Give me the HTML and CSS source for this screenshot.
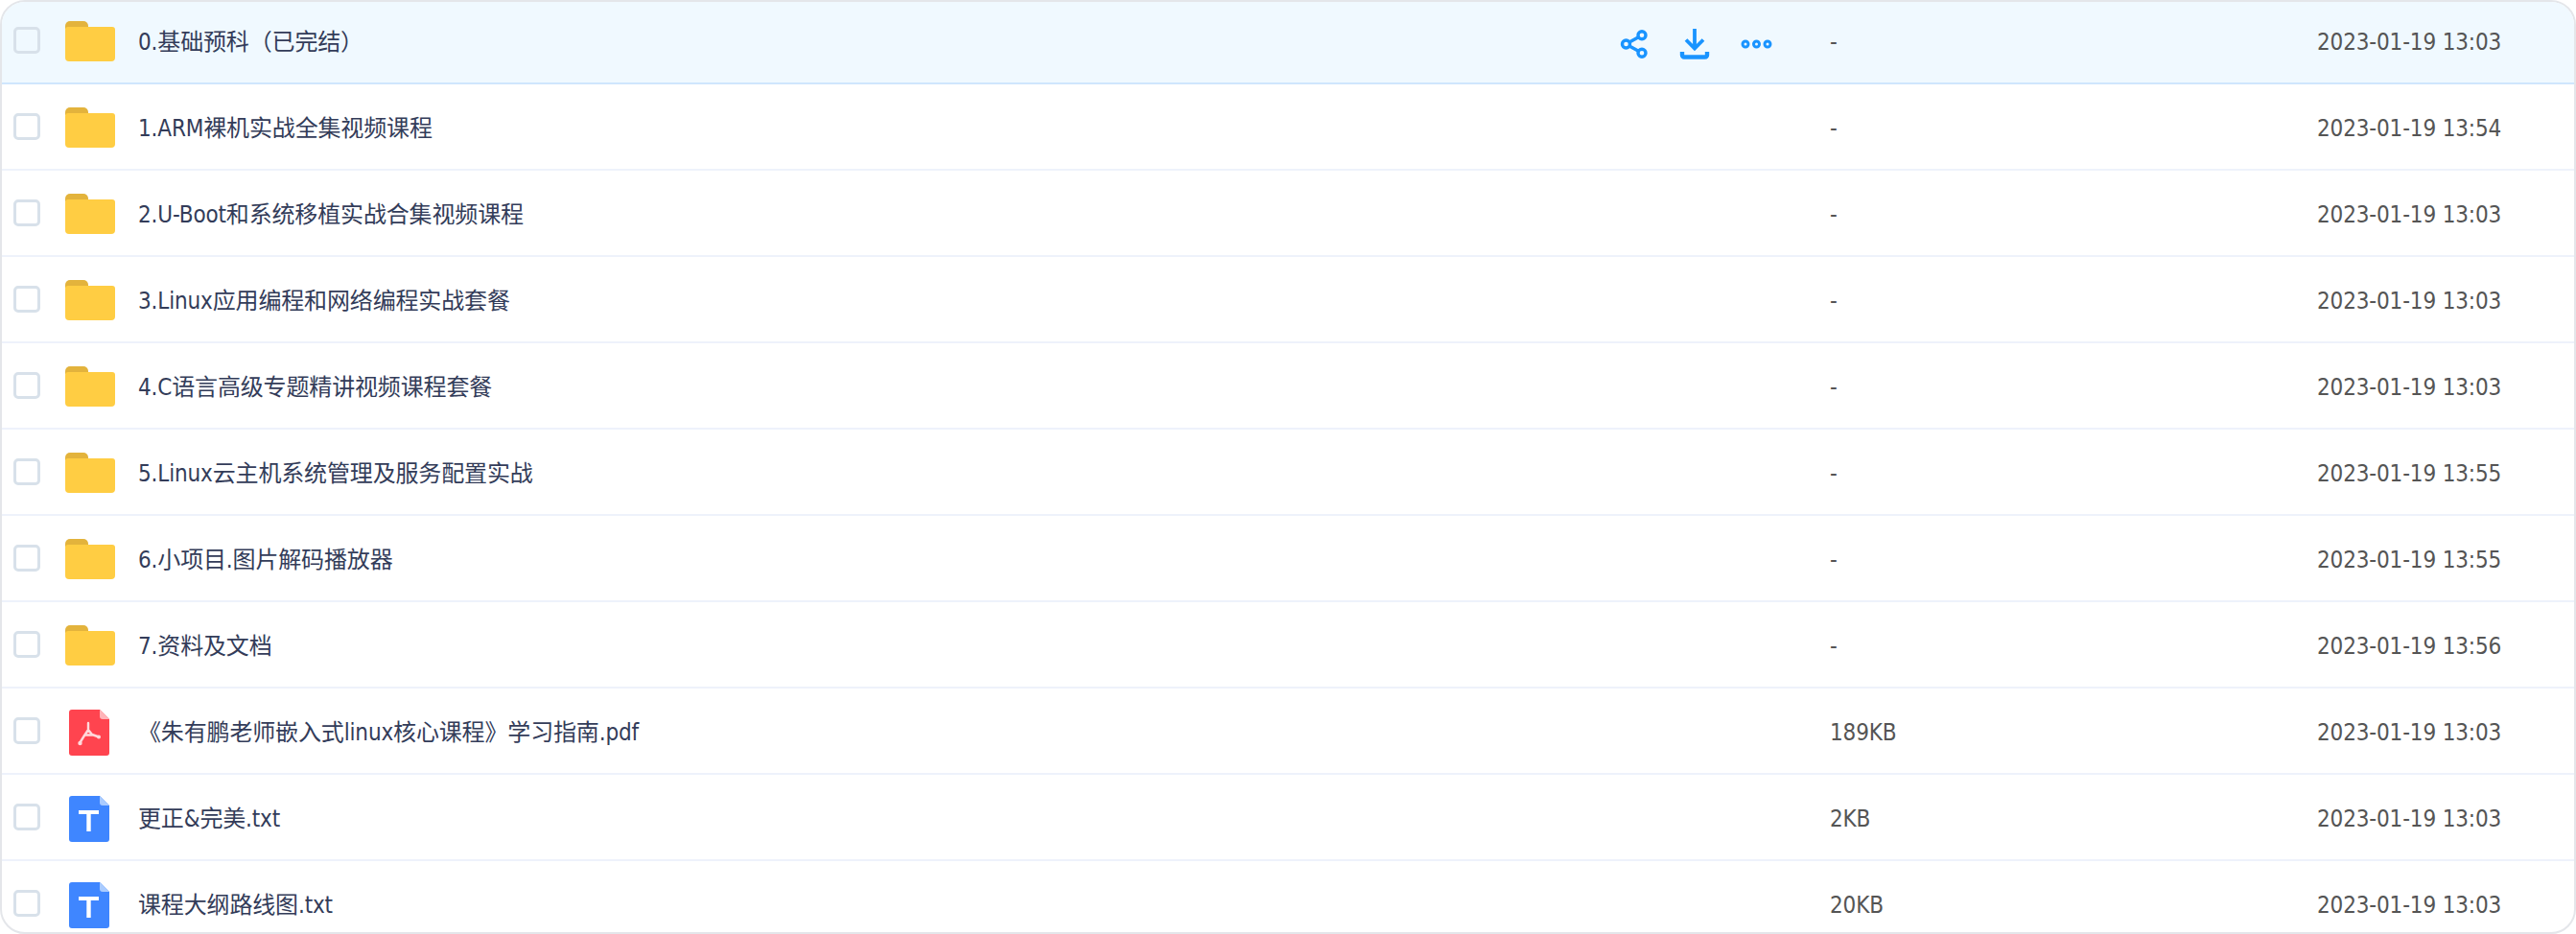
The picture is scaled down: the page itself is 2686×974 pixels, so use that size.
FILE: index.html
```html
<!DOCTYPE html>
<html lang="zh-CN">
<head>
<meta charset="utf-8">
<title>文件列表</title>
<link rel="stylesheet" href="styles.css">
</head>
<body>
<svg class="defs" width="0" height="0" aria-hidden="true">
  <symbol id="folder" viewBox="0 0 52 42">
    <path d="M0 5a5 5 0 0 1 5-5h14a5 5 0 0 1 5 5v3H0z" fill="#e3b33c"/>
    <path d="M0 9a3 3 0 0 1 3-3h21v0h25a3 3 0 0 1 3 3v29a4 4 0 0 1-4 4H4a4 4 0 0 1-4-4z" fill="#ffcd43"/>
  </symbol>
  <symbol id="pdf" viewBox="0 0 42 48">
    <path d="M3 0h29l10 10v35a3 3 0 0 1-3 3H3a3 3 0 0 1-3-3V3a3 3 0 0 1 3-3z" fill="#ff444f"/>
    <path d="M32 0l10 10h-7a3 3 0 0 1-3-3z" fill="#ffb4b8"/>
    <path d="M20 14v7l-4 6-5 8M20 21l4 5 7 2.500M16.500 26.500H24" fill="none" stroke="#ffd9db" stroke-width="2.400" stroke-linecap="round" stroke-linejoin="round"/>
    <circle cx="11.500" cy="35" r="2.200" fill="#ffd9db"/><circle cx="31" cy="28.500" r="2" fill="#ffd9db"/>
  </symbol>
  <symbol id="txt" viewBox="0 0 42 48">
    <path d="M3 0h29l10 10v35a3 3 0 0 1-3 3H3a3 3 0 0 1-3-3V3a3 3 0 0 1 3-3z" fill="#3f86ff"/>
    <path d="M32 0l10 10h-7a3 3 0 0 1-3-3z" fill="#a9cbff"/>
    <path d="M10 15h21v4h-8.300v18h-4.400V19H10z" fill="#fff"/>
  </symbol>
</svg>
<main class="panel">
  <ul class="list">
    <li class="row row-active">
      <span class="check"></span>
      <span class="icon"><svg class="ic-folder"><use href="#folder"/></svg></span>
      <span class="name">0.基础预科（已完结）</span>
      <span class="actions">
        <svg class="act act-share" viewBox="0 0 28 30" fill="none" stroke="#1a94ff" stroke-width="3.400"><circle cx="5.500" cy="15" r="4"/><circle cx="22" cy="5.800" r="4"/><circle cx="22" cy="24.200" r="4"/><path d="M9 13l9-5M9 17l9 5"/></svg>
        <svg class="act act-down" viewBox="0 0 30 32" fill="none" stroke="#1a94ff" stroke-width="3.800"><path d="M15 0v20M6 11.500l9 9 9-9"/><path d="M2 24v3.500a2 2 0 0 0 2 2h22a2 2 0 0 0 2-2V24" stroke-width="4.400"/></svg>
        <svg class="act act-more" viewBox="0 0 33 12" fill="none" stroke="#1a94ff" stroke-width="3"><circle cx="5" cy="6" r="3"/><circle cx="16.500" cy="6" r="3"/><circle cx="28" cy="6" r="3"/></svg>
      </span>
      <span class="size">-</span>
      <span class="date">2023-01-19 13:03</span>
    </li>
    <li class="row"><span class="check"></span><span class="icon"><svg class="ic-folder"><use href="#folder"/></svg></span><span class="name">1.ARM裸机实战全集视频课程</span><span class="size">-</span><span class="date">2023-01-19 13:54</span></li>
    <li class="row"><span class="check"></span><span class="icon"><svg class="ic-folder"><use href="#folder"/></svg></span><span class="name">2.U-Boot和系统移植实战合集视频课程</span><span class="size">-</span><span class="date">2023-01-19 13:03</span></li>
    <li class="row"><span class="check"></span><span class="icon"><svg class="ic-folder"><use href="#folder"/></svg></span><span class="name">3.Linux应用编程和网络编程实战套餐</span><span class="size">-</span><span class="date">2023-01-19 13:03</span></li>
    <li class="row"><span class="check"></span><span class="icon"><svg class="ic-folder"><use href="#folder"/></svg></span><span class="name">4.C语言高级专题精讲视频课程套餐</span><span class="size">-</span><span class="date">2023-01-19 13:03</span></li>
    <li class="row"><span class="check"></span><span class="icon"><svg class="ic-folder"><use href="#folder"/></svg></span><span class="name">5.Linux云主机系统管理及服务配置实战</span><span class="size">-</span><span class="date">2023-01-19 13:55</span></li>
    <li class="row"><span class="check"></span><span class="icon"><svg class="ic-folder"><use href="#folder"/></svg></span><span class="name">6.小项目.图片解码播放器</span><span class="size">-</span><span class="date">2023-01-19 13:55</span></li>
    <li class="row"><span class="check"></span><span class="icon"><svg class="ic-folder"><use href="#folder"/></svg></span><span class="name">7.资料及文档</span><span class="size">-</span><span class="date">2023-01-19 13:56</span></li>
    <li class="row"><span class="check"></span><span class="icon"><svg class="ic-file"><use href="#pdf"/></svg></span><span class="name">《朱有鹏老师嵌入式linux核心课程》学习指南.pdf</span><span class="size">189KB</span><span class="date">2023-01-19 13:03</span></li>
    <li class="row"><span class="check"></span><span class="icon"><svg class="ic-file"><use href="#txt"/></svg></span><span class="name">更正&amp;完美.txt</span><span class="size">2KB</span><span class="date">2023-01-19 13:03</span></li>
    <li class="row"><span class="check"></span><span class="icon"><svg class="ic-file"><use href="#txt"/></svg></span><span class="name">课程大纲路线图.txt</span><span class="size">20KB</span><span class="date">2023-01-19 13:03</span></li>
  </ul>
</main>
</body>
</html>
```
FILE: styles.css
```css
* { box-sizing: border-box; }
html, body { margin: 0; padding: 0; background: #fff; }
body { height: 974px; overflow: hidden; }
.defs { display: block; height: 0; }
.panel {
  height: 974px;
  border: 2px solid #e4e6ea;
  border-radius: 26px;
  overflow: hidden;
  background: #fff;
}
.list { list-style: none; margin: -4px 0 0; padding: 0; }
.row {
  display: flex;
  align-items: center;
  height: 90px;
  padding-left: 12px;
  border-bottom: 2px solid #eef2fb;
  font: 24px/32px "DejaVu Sans", "Noto Sans CJK SC", sans-serif;
  font-stretch: condensed;
  letter-spacing: -0.15px;
  color: #333c59;
}
.row-active { background: #f0f9ff; border-bottom-color: #cfe6fd; }
.check {
  flex: none;
  width: 28px;
  height: 28px;
  border: 3px solid #d8e1ea;
  border-radius: 5px;
  background: #fff;
}
.row-active .check { background: #f0f9ff; }
.icon { flex: none; width: 60px; margin-left: 22px; display: flex; justify-content: center; }
.ic-folder { width: 52px; height: 42px; display: block; margin-top: 2px; }
.ic-file { width: 42px; height: 48px; display: block; margin: 4px 2px 0 0; }
.name { flex: 1; min-width: 0; margin-left: 20px; padding-top: 3px; white-space: nowrap; }
.actions { flex: none; display: flex; align-items: center; margin: 8px 60px 0 0; }
.act { display: block; flex: none; overflow: visible; }
.act-share { width: 28px; height: 30px; margin-right: 34px; }
.act-down { width: 30px; height: 32px; margin-right: 33px; }
.act-more { width: 33px; height: 12px; }
.size { flex: none; width: 508px; padding-top: 3px; color: #555; }
.date { flex: none; width: 268px; padding-top: 3px; color: #555; }
```
